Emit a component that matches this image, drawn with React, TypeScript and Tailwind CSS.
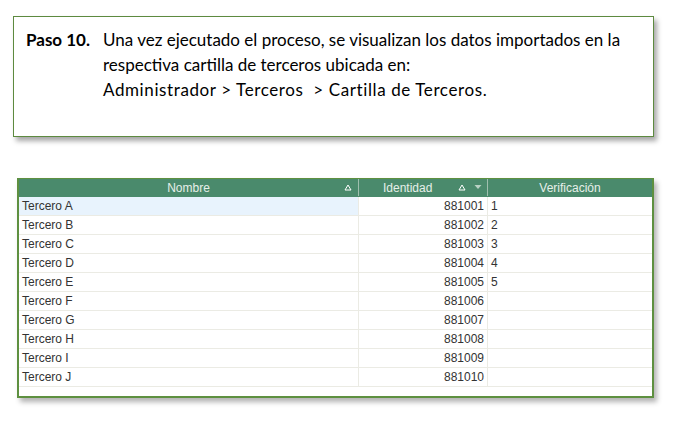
import React from "react";

const rows = [
  ["Tercero A", "881001", "1"],
  ["Tercero B", "881002", "2"],
  ["Tercero C", "881003", "3"],
  ["Tercero D", "881004", "4"],
  ["Tercero E", "881005", "5"],
  ["Tercero F", "881006", ""],
  ["Tercero G", "881007", ""],
  ["Tercero H", "881008", ""],
  ["Tercero I", "881009", ""],
  ["Tercero J", "881010", ""],
];

function Tri() {
  return (
    <svg width="8" height="7" viewBox="0 0 8 7" className="shrink-0">
      <path d="M4 1 L7 6 L1 6 Z" fill="none" stroke="#ffffff" strokeWidth="1" />
    </svg>
  );
}

function Down() {
  return (
    <svg width="8" height="6" viewBox="0 0 8 6" className="shrink-0">
      <path d="M0.5 1 L7.5 1 L4 5 Z" fill="#b9d2c4" />
    </svg>
  );
}

export default function App() {
  return (
    <div className="w-[675px] h-[423px] bg-white relative overflow-hidden">
      <div className="pt-[16px] pl-[13px]">
        <div
          className="w-[641px] h-[121px] border border-[#5d8a3f] bg-white pl-[12px] pt-[10px] shadow-[3px_4px_5px_rgba(0,0,0,0.35)] text-[17px] leading-[25px] text-black flex"
          style={{ fontFamily: "Lato, 'Open Sans', sans-serif" }}
        >
          <div className="w-[77px] font-bold shrink-0">Paso 10.</div>
          <div>
            <div>Una vez ejecutado el proceso, se visualizan los datos importados en la</div>
            <div>respectiva cartilla de terceros ubicada en:</div>
            <div className="tracking-[0.6px]">Administrador &gt; Terceros &nbsp;&gt; Cartilla de Terceros.</div>
          </div>
        </div>
      </div>
      <div className="pt-[41px] pl-[17px]">
        <div
          className="w-[637px] h-[220px] border-2 border-t border-[#5e9040] bg-white shadow-[3px_4px_5px_rgba(0,0,0,0.3)] text-[12px] text-[#333333]"
          style={{ fontFamily: "'Liberation Sans', Arial, sans-serif" }}
        >
          <div className="flex h-[18px] pb-[1px] bg-[#4a8a6c] text-[#e6efe9] items-center">
            <div className="w-[340px] h-full relative flex items-center justify-center border-r border-[#9fbfae]">
              <span>Nombre</span>
              <span className="absolute right-[6px] top-[5px]"><Tri /></span>
            </div>
            <div className="w-[129px] h-full relative flex items-center border-r border-[#9fbfae]">
              <span className="ml-[24px]">Identidad</span>
              <span className="absolute right-[21px] top-[5px]"><Tri /></span>
              <span className="absolute right-[5px] top-[5px]"><Down /></span>
            </div>
            <div className="flex-1 h-full flex items-center justify-center">Verificación</div>
          </div>
          {rows.map((r, i) => (
            <div key={i} className="flex h-[19px] border-b border-[#ebebe4] items-center">
              <div
                className={`w-[340px] h-full flex items-center pl-[3px] border-r border-[#ebebe4] ${i === 0 ? "bg-[#e8f3fd]" : ""}`}
              >
                {r[0]}
              </div>
              <div className="w-[129px] h-full flex items-center justify-end pr-[3px] border-r border-[#ebebe4]">
                {r[1]}
              </div>
              <div className="flex-1 h-full flex items-center pl-[3px]">{r[2]}</div>
            </div>
          ))}
        </div>
      </div>
    </div>
  );
}
